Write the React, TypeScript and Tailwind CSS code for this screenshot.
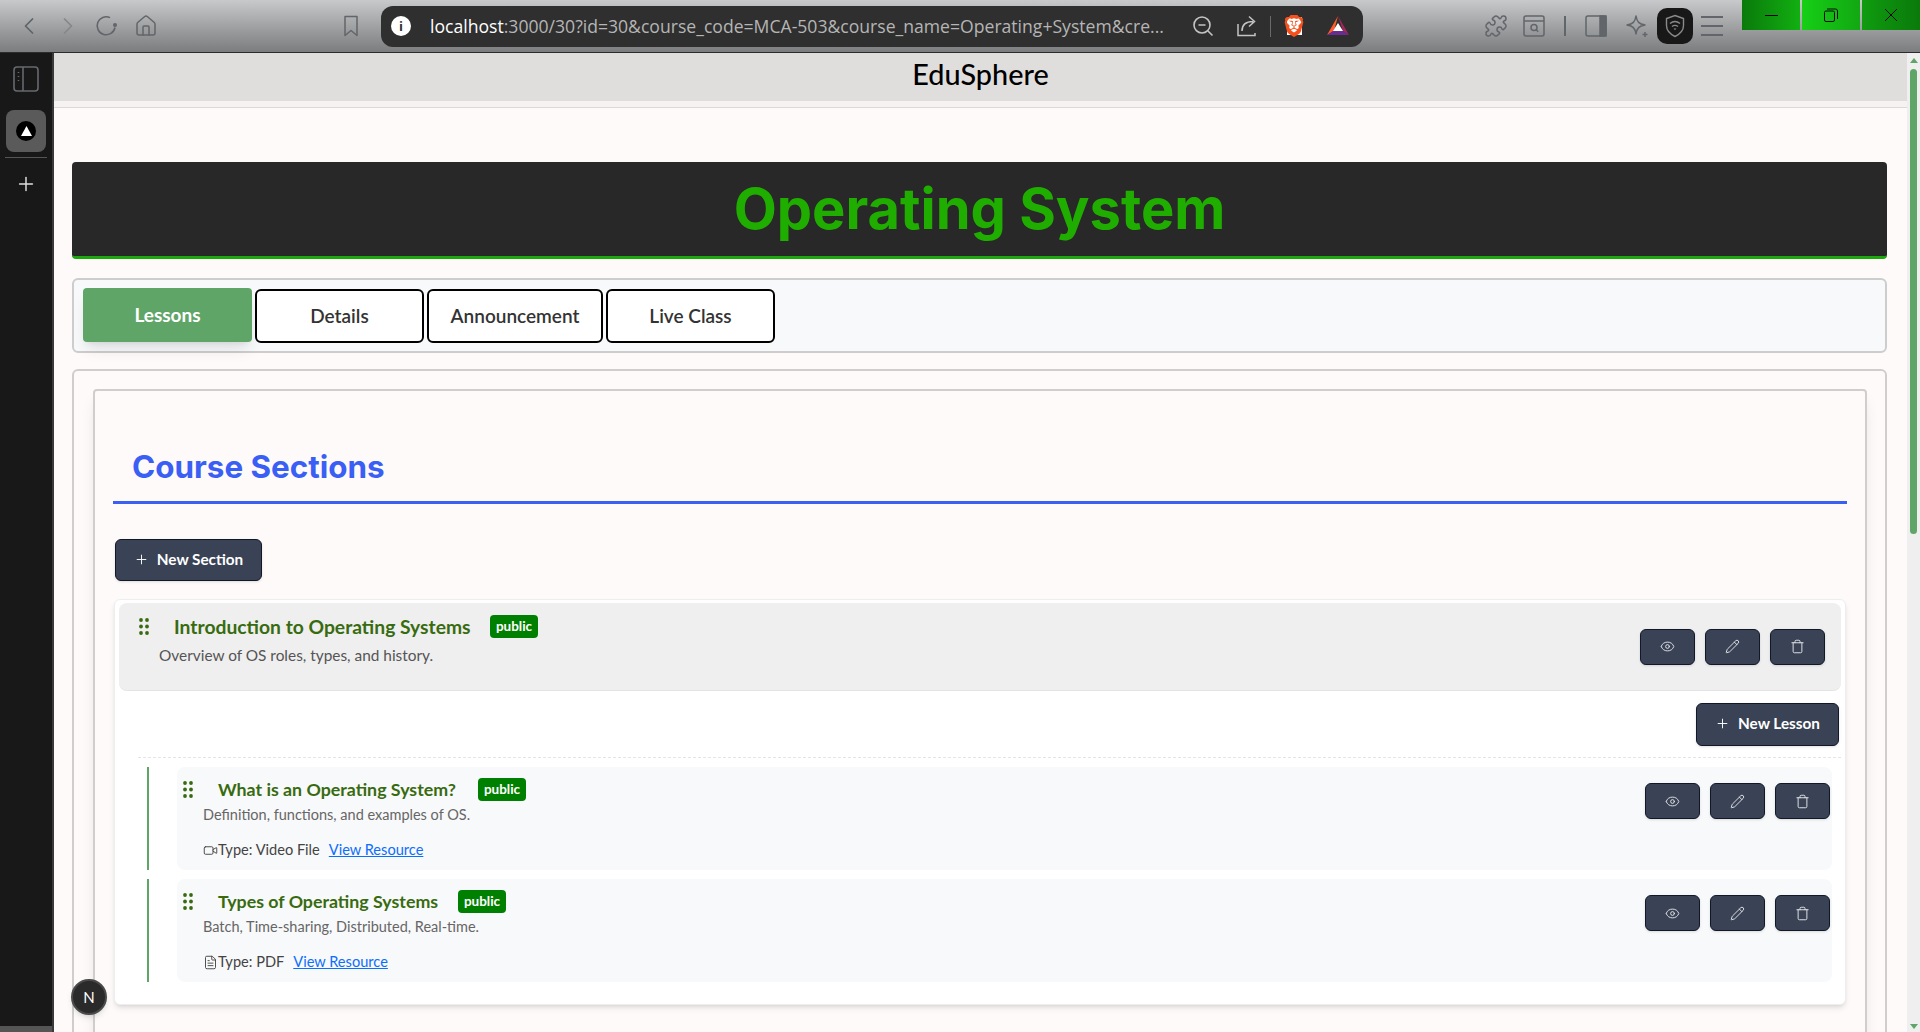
import {
  ChevronLeft,
  ChevronRight,
  Eye,
  FileText,
  House,
  Pencil,
  Plus,
  Puzzle,
  Trash,
  Video,
} from "lucide-react";
import { SiBrave } from "react-icons/si";

function DragDots() {
  return (
    <svg width="10" height="17" viewBox="0 0 10 17" className="shrink-0" fill="#386b10">
      <circle cx="2" cy="2" r="1.9" />
      <circle cx="8" cy="2" r="1.9" />
      <circle cx="2" cy="8.5" r="1.9" />
      <circle cx="8" cy="8.5" r="1.9" />
      <circle cx="2" cy="15" r="1.9" />
      <circle cx="8" cy="15" r="1.9" />
    </svg>
  );
}

function PublicBadge() {
  return (
    <span className="flex h-[23px] w-[48px] shrink-0 items-center justify-center rounded bg-[#008000] text-[13.5px] font-bold text-white">
      public
    </span>
  );
}

function ActionButtons() {
  const btn =
    "flex h-9 w-[55px] items-center justify-center rounded-md border border-[#111827] bg-[#3a4356] text-[#e5e7eb] shadow-sm";
  return (
    <div className="flex shrink-0 gap-[10px]">
      <button className={btn}>
        <Eye size={15} strokeWidth={1.5} />
      </button>
      <button className={btn}>
        <Pencil size={15} strokeWidth={1.5} />
      </button>
      <button className={btn}>
        <Trash size={15} strokeWidth={1.5} />
      </button>
    </div>
  );
}

function DarkButton({ label, width, height }: { label: string; width: string; height: string }) {
  return (
    <button
      className={`flex items-center justify-center gap-2 rounded-md border border-[#111827] bg-[#3a4356] pb-0.5 text-[15.3px] font-bold text-white shadow-sm ${width} ${height}`}
    >
      <Plus size={15} strokeWidth={1.5} />
      {label}
    </button>
  );
}

function Lesson({
  title,
  desc,
  type,
  icon,
  titleWidth,
}: {
  title: string;
  desc: string;
  type: string;
  icon: React.ReactNode;
  titleWidth: string;
}) {
  return (
    <div className="mr-[9px] ml-7 border-l-2 border-[#5fa568] pl-7">
      <div className="flex h-[103px] items-start justify-between rounded-lg bg-[#f8f9fa] pr-0.5 pl-1.5">
        <div>
          <div className="flex items-center pt-2.5">
            <DragDots />
            <h4 className={`ml-[25px] text-[17.8px] leading-[25px] font-bold text-[#386b10] ${titleWidth}`}>{title}</h4>
            <PublicBadge />
          </div>
          <p className="mt-[3px] ml-5 text-[14.5px] leading-5 text-[#666]">{desc}</p>
          <div className="mt-[15px] ml-5 flex items-center text-[14.6px] leading-5 text-[#444]">
            {icon}
            <span>Type: {type}</span>
            <a className="ml-[9px] text-[#0d6efd] underline">View Resource</a>
          </div>
        </div>
        <div className="pt-4">
          <ActionButtons />
        </div>
      </div>
    </div>
  );
}

function Toolbar() {
  const stroke = "#62666a";
  return (
    <div className="relative flex h-[53px] shrink-0 items-center border-b border-[#2b2b2b] bg-gradient-to-b from-[#c8c9ca] to-[#7b7d7f]">
      <ChevronLeft size={28} strokeWidth={1.5} color="#5f6367" className="ml-[15px]" />
      <ChevronRight size={28} strokeWidth={1.5} color="#85888b" className="ml-[11px]" />
      <svg width="24" height="24" viewBox="0 0 24 24" fill="none" stroke={stroke} strokeWidth="1.6" className="ml-[13px]">
        <path d="M20 13.5A9 9 0 1 1 15 3.6" />
        <circle cx="20" cy="11" r="2" fill={stroke} stroke="none" />
      </svg>
      <House size={24} strokeWidth={1.5} color={stroke} className="ml-[15px]" />
      <svg width="16" height="24" viewBox="0 0 16 24" fill="none" stroke={stroke} strokeWidth="1.5" className="ml-[185px]">
        <path d="M2 2.5h12v19l-6-5-6 5z" strokeLinejoin="round" />
      </svg>
      <div className="ml-[22px] flex h-[41px] w-[982px] items-center rounded-xl bg-[#2f2f2f] font-['Open_Sans',sans-serif]">
        <span className="ml-[10px] flex h-5 w-5 items-center justify-center rounded-full bg-white text-[13px] leading-none font-bold text-[#2f2f2f]">
          i
        </span>
        <span className="ml-[19px] w-[742px] truncate text-[17.6px] text-[#b5b5b5]">
          <span className="text-white">localhost</span>:3000/30?id=30&amp;course_code=MCA-503&amp;course_name=Operating+System&amp;cre...
        </span>
        <svg width="24" height="24" viewBox="0 0 24 24" fill="none" stroke="#c4c4c4" strokeWidth="1.6" className="ml-[19px]">
          <circle cx="11" cy="11" r="8" />
          <path d="M7.5 11h7M17 17l4.5 4.5" />
        </svg>
        <svg width="24" height="24" viewBox="0 0 24 24" fill="none" stroke="#c4c4c4" strokeWidth="1.5" className="ml-[21px]">
          <path d="M2 10v11.5h17V19M6 17c0-6 4-9.5 11-9.5M13 2.5l5.5 5-5.5 5" />
        </svg>
        <div className="ml-[10px] h-[21px] w-px bg-[#6a6a6a]" />
        <span className="relative ml-[12px] flex h-6 w-[22px] items-center justify-center">
          <span className="absolute h-[18px] w-[15px] bg-white" />
          <SiBrave size={24} color="#f4511e" className="relative" />
        </span>
        <svg width="24" height="22" viewBox="0 0 24 22" className="ml-[21px]">
          <path d="M12 1L1 20l7-4z" fill="#ff5a2c" />
          <path d="M12 1l11 19-6-4z" fill="#a5265f" />
          <path d="M1 20h22l-6-4H7z" fill="#6a2c91" />
          <path d="M12 8l5 8H7z" fill="#fff" />
        </svg>
      </div>
      <Puzzle size={24} strokeWidth={1.5} color={stroke} className="ml-[121px]" />
      <svg width="22" height="22" viewBox="0 0 22 22" fill="none" stroke={stroke} strokeWidth="1.5" className="ml-[15px]">
        <rect x="1" y="1" width="20" height="20" rx="2" />
        <path d="M1 6h20" />
        <circle cx="11" cy="12.5" r="3" />
        <path d="M13.2 14.7l2 2" />
      </svg>
      <div className="ml-[19px] h-5 w-[2px] bg-[#62666a]" />
      <svg width="22" height="22" viewBox="0 0 22 22" fill="none" stroke={stroke} strokeWidth="1.5" className="ml-[19px]">
        <rect x="1" y="1" width="20" height="20" rx="2" />
        <rect x="15" y="1" width="6" height="20" fill={stroke} />
      </svg>
      <svg width="24" height="24" viewBox="0 0 24 24" fill="none" stroke={stroke} strokeWidth="1.5" className="ml-[18px]">
        <path d="M11 2c1 6 3 8 9 9-6 1-8 3-9 9-1-6-3-8-9-9 6-1 8-3 9-9z" strokeLinejoin="round" />
        <path d="M20 18v5M17.5 20.5h5" />
      </svg>
      <div className="ml-[8px] flex h-9 w-9 items-center justify-center rounded-[10px] bg-[#181818]">
        <svg width="20" height="24" viewBox="0 0 20 24" fill="none" stroke="#8a8a8a" strokeWidth="1.4">
          <path d="M10 1.5l8.5 3v7c0 5-3.5 8.5-8.5 11-5-2.5-8.5-6-8.5-11v-7z" />
          <path d="M5 9.5c3-2.5 7-2.5 10 0M7 12.5c2-1.5 4-1.5 6 0M9 15.2c.7-.5 1.3-.5 2 0" />
        </svg>
      </div>
      <div className="ml-[8px] flex w-[22px] flex-col gap-[7px]">
        <div className="h-[2px] bg-[#62666a]" />
        <div className="h-[2px] bg-[#62666a]" />
        <div className="h-[2px] bg-[#62666a]" />
      </div>

      {/* window controls */}
      <div className="absolute top-0 right-0 flex h-[30px] gap-0.5">
        <div className="flex w-[58px] items-center justify-center bg-gradient-to-r from-[#0a7a0a] to-[#12b012]">
          <div className="h-px w-[13px] bg-black" />
        </div>
        <div className="flex w-[58px] items-center justify-center bg-gradient-to-r from-[#16cf16] to-[#12a812]">
          <svg width="14" height="14" viewBox="0 0 14 14" fill="none" stroke="#0a0a0a">
            <rect x="0.5" y="3" width="10" height="10.5" rx="1.5" />
            <path d="M3 1h8.5a2 2 0 0 1 2 2v8" />
          </svg>
        </div>
        <div className="flex w-[58px] items-center justify-center bg-gradient-to-r from-[#109c10] to-[#0a7a0a]">
          <svg width="14" height="14" viewBox="0 0 14 14" stroke="#0a0a0a">
            <path d="M1 1l12 12M13 1L1 13" />
          </svg>
        </div>
      </div>
    </div>
  );
}

function Sidebar() {
  return (
    <div className="flex w-[54px] shrink-0 flex-col items-center border-r-2 border-[#3a3a3a] bg-[#181818]">
      <svg width="26" height="26" viewBox="0 0 26 26" fill="none" stroke="#666a6e" strokeWidth="1.6" className="mt-[13px]">
        <rect x="1" y="1" width="24" height="24" rx="3" />
        <path d="M10 1v24" />
        <path d="M5.5 6v1M5.5 10v1M5.5 14v1" />
      </svg>
      <div className="mt-[18px] flex h-[42px] w-10 items-center justify-center rounded-lg bg-[#5a5a5a]">
        <div className="flex h-5 w-5 items-center justify-center rounded-full bg-black">
          <svg width="11" height="10" viewBox="0 0 11 10" fill="#fff">
            <path d="M5.5 0L11 10H0z" />
          </svg>
        </div>
      </div>
      <div className="mt-[5px] h-px w-[42px] bg-[#555]" />
      <Plus size={22} strokeWidth={1.6} color="#e0e0e0" className="mt-[15px]" />
      <div className="mt-auto h-1.5 w-full bg-[#555]" />
    </div>
  );
}

function Scrollbar() {
  return (
    <div className="flex w-[13px] shrink-0 flex-col items-center bg-[#efefef]">
      <div className="mt-[5px] h-0 w-0 border-x-[4px] border-b-[5px] border-x-transparent border-b-[#5fa568]" />
      <div className="mt-[6px] h-[465px] w-[7px] rounded bg-[#5fa568]" />
      <div className="mt-auto mb-[3px] h-0 w-0 border-x-[4px] border-t-[5px] border-x-transparent border-t-[#5fa568]" />
    </div>
  );
}

export default function App() {
  return (
    <div className="flex h-screen flex-col overflow-hidden bg-[#fffafa] font-['Lato',sans-serif]">
      <Toolbar />
      <div className="flex min-h-0 flex-1">
        <Sidebar />
        <div className="relative min-w-0 flex-1 overflow-hidden">
          <header className="flex h-[48px] items-center justify-center bg-[#e0dedd] pb-1 text-[28.8px] font-medium text-black">
            EduSphere
          </header>
          <div className="h-[7px] border-b border-[#dcd8d8] bg-[#f6f2f1]" />

          <main className="pt-[54px] pr-5 pl-[18px]">
            <div className="flex h-[97px] items-center justify-center rounded border-b-[3px] border-[#1ba80b] bg-[#282828]">
              <h1 className="font-['Inter',sans-serif] text-[56px] font-bold text-[#1fae00]">Operating System</h1>
            </div>

            <div className="mt-[19px] flex h-[75px] gap-[3px] rounded-md border-2 border-[#cdcdcd] bg-[#f8f9fa] pt-2 pl-[9px]">
              <button className="h-[54px] w-[169px] rounded bg-[#5fa568] text-[19px] font-bold text-white shadow-lg">
                Lessons
              </button>
              <button className="mt-px h-[54px] w-[169px] rounded-md border-2 border-black bg-white text-[19px] font-semibold text-[#333]">
                Details
              </button>
              <button className="mt-px h-[54px] w-[176px] rounded-md border-2 border-black bg-white text-[19px] font-semibold text-[#333]">
                Announcement
              </button>
              <button className="mt-px h-[54px] w-[169px] rounded-md border-2 border-black bg-white text-[19px] font-semibold text-[#333]">
                Live Class
              </button>
            </div>

            <div className="mt-4 rounded-md border-2 border-[#d0cdcd] py-[18px] pr-[18px] pl-[19px]">
              <div className="rounded border-2 border-[#d0cdcd] px-[18px] pb-16 shadow-lg">
                <div className="border-b-[3px] border-[#3a5ff5] pt-[58px] pb-4 pl-[19px]">
                  <h2 className="font-['Inter',sans-serif] text-[31.4px] leading-9 font-bold text-[#3a5ff5]">
                    Course Sections
                  </h2>
                </div>

                <div className="mt-[35px] ml-0.5">
                  <DarkButton label="New Section" width="w-[147px]" height="h-[42px]" />
                </div>

                <div className="mx-px mt-[18px] rounded-md border border-[#eeeeee] bg-white px-1 pt-[3px] pb-[22px] shadow-md">
                  <div className="flex h-[88px] items-center justify-between rounded-lg border-b border-[#e4e4e4] bg-[#efefef] pr-4 pl-5">
                    <div className="self-start pt-2.5">
                      <div className="flex items-center">
                        <DragDots />
                        <h3 className="ml-[25px] w-[316px] text-[19.3px] leading-[27px] font-bold text-[#386b10]">
                          Introduction to Operating Systems
                        </h3>
                        <PublicBadge />
                      </div>
                      <p className="mt-[5px] ml-5 text-[15.4px] leading-5 text-[#555]">
                        Overview of OS roles, types, and history.
                      </p>
                    </div>
                    <ActionButtons />
                  </div>

                  <div className="mt-3 flex justify-end pr-0.5">
                    <DarkButton label="New Lesson" width="w-[143px]" height="h-[43px]" />
                  </div>

                  <div className="mt-[11px] ml-[19px] border-t border-dashed border-[#e5e5e5]" />

                  <div className="mt-[9px] flex flex-col gap-[9px]">
                    <Lesson
                      title="What is an Operating System?"
                      desc="Definition, functions, and examples of OS."
                      type="Video File"
                      titleWidth="w-[260px]"
                      icon={<Video size={15} strokeWidth={1.5} />}
                    />
                    <Lesson
                      title="Types of Operating Systems"
                      desc="Batch, Time-sharing, Distributed, Real-time."
                      type="PDF"
                      titleWidth="w-[240px]"
                      icon={<FileText size={15} strokeWidth={1.5} />}
                    />
                  </div>
                </div>
              </div>
            </div>
          </main>

          {/* next dev indicator */}
          <div className="absolute bottom-[17px] left-[17px] flex h-9 w-9 items-center justify-center rounded-full border-2 border-[#4a4a4a] bg-[#2a2a2a] text-[15px] font-normal text-white shadow-md">
            N
          </div>
        </div>
        <Scrollbar />
      </div>
    </div>
  );
}
